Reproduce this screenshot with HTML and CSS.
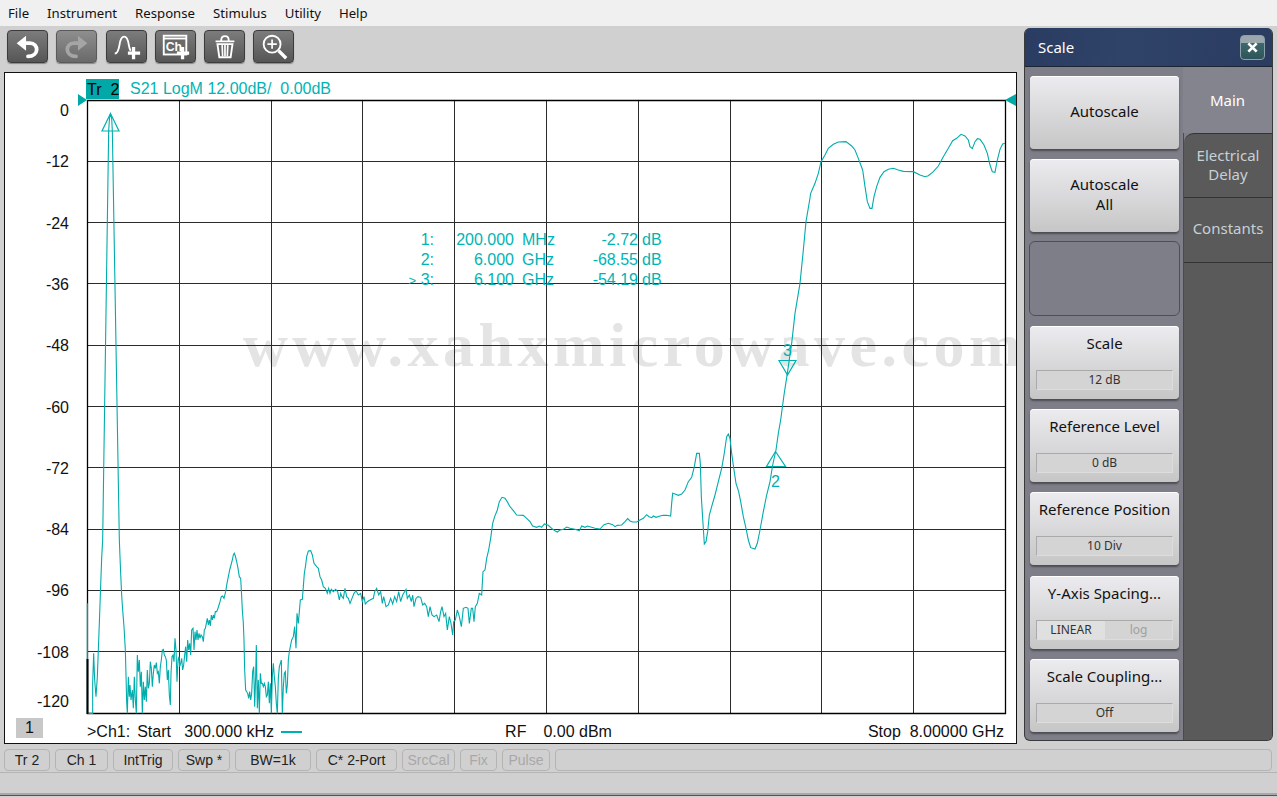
FILE: index.html
```html
<!DOCTYPE html>
<html lang="en">
<head>
<meta charset="utf-8">
<title>Scale</title>
<link rel="stylesheet" href="styles.css">
</head>
<body>
<nav class="menu">
  <span class="menu-item">File</span><span class="menu-item">Instrument</span><span class="menu-item">Response</span><span class="menu-item">Stimulus</span><span class="menu-item">Utility</span><span class="menu-item">Help</span>
</nav>
<div class="work">
  <div class="left">
    <div class="toolbar">
      <button class="tool"><svg viewBox="0 0 41 33" class="ico"><path d="M9 13 19 5V21Z" class="fill"/><path d="M18 13H23C33 13 33 27 21 27" class="line"/></svg></button>
      <button class="tool off"><svg viewBox="0 0 41 33" class="ico"><path d="M32 13 22 5V21Z" class="fill-off"/><path d="M23 13H18C8 13 8 27 20 27" class="line-off"/></svg></button>
      <button class="tool"><svg viewBox="0 0 41 33" class="ico"><path d="M8 24C11 24 12 21 13 15 14 8 16 6 18 6 20 6 22 8 23 15 23.500 18 24 20 25 21" class="thin"/><path d="M28 17V30M22 23.500H35" class="plus"/></svg></button>
      <button class="tool"><svg viewBox="0 0 41 33" class="ico"><rect x="8" y="5" width="24" height="20" class="box"/><path d="M8 8H32" class="thin"/><text x="10" y="21" class="ch">Ch</text><path d="M28 17V30M22 23.500H35" class="plus"/></svg></button>
      <button class="tool"><svg viewBox="0 0 41 33" class="ico"><path d="M11 11H31M17 10C17 4 25 4 25 10" class="thin"/><path d="M13 14H29L27 28H15Z" class="thin"/><path d="M18 15 18.500 27M21 15V27M24 15 23.500 27" class="stem"/></svg></button>
      <button class="tool"><svg viewBox="0 0 41 33" class="ico"><circle cx="19" cy="14" r="9" class="thin"/><path d="M19 9V19M14 14H24" class="stem"/><path d="M26 21 34 29" class="plus"/></svg></button>
    </div>
    <section class="chart">
      <header class="trace-head"><span class="trace-tag">Tr&nbsp;&nbsp;2</span><span class="trace-info">S21 LogM 12.00dB/&nbsp; 0.00dB</span></header>
      <svg class="plot" viewBox="5 99 1011 617" width="1011" height="617">
        <text class="mark-water" x="243" y="366">www.xahxmicrowave.com</text>
        <path class="grid" d="M179.500 100V714M271.500 100V714M362.500 100V714M454.500 100V714M546.500 100V714M638.500 100V714M730.500 100V714M821.500 100V714M913.500 100V714M88 161.500H1005M88 222.500H1005M88 283.500H1005M88 345.500H1005M88 406.500H1005M88 467.500H1005M88 529.500H1005M88 590.500H1005M88 651.500H1005"/>
        <path class="frame" d="M87.500 100.500H1005.500V713.500H87.500Z"/>
        <g class="axis">
          <text x="69" y="116">0</text><text x="69" y="167">-12</text><text x="69" y="229">-24</text><text x="69" y="290">-36</text><text x="69" y="351">-48</text><text x="69" y="413">-60</text><text x="69" y="474">-72</text><text x="69" y="535">-84</text><text x="69" y="596">-96</text><text x="69" y="658">-108</text><text x="69" y="707">-120</text>
        </g>
        <path class="ref" d="M78 94 87 100 78 106Z"/>
        <path class="ref" d="M1016 94 1005 100 1016 106Z"/>
        <g transform="translate(80 540) scale(.33333)">
          <polyline class="tr" points="22,190 22,520 38,520 38,430 41,340 44,420 48,470 52,410 55,330 58,250 61,165 65,55 68,0 86,-1227 88.500,-1266 91.500,-1278 95,-1266 97,-1227 118,0 122,100 125,165 128,210 132,260 136,330 138,405 140,485 142,520 145,410 148,470 150,435 153,480 157,450 160,505 163,410 166,480 169,520 172,345 175,395 178,360 181,440 184,395 187,520 190,425 193,480 196,440 199,485 202,390 205,445 208,430 211,365 214,385 217,440 220,400 223,375 226,385 229,368 232,400 235,395 238,430 241,380 244,360 247,330 250,328 253,345 256,350 259,360 262,420 265,390 268,465 271,495 273,400 276,350 279,345 282,365 285,295 288,330 291,425 294,360 297,350 299,380 302,370 305,355 308,390 311,375 314,345 317,320 320,365 323,300 326,330 329,310 332,345 335,270 339,265 342,330 345,275 348,300 351,270 354,300 357,280 360,295 363,285 367,290 370,305 373,270 376,265 379,250 382,235 385,255 388,240 391,258 394,225 397,240 400,225 403,235 406,215 410,215 413,208 417,195 420,185 424,170 428,168 432,175 437,155 441,130 445,110 449,90 453,75 457,60 460,45 463,40 466,48 470,65 474,85 478,110 482,115 484,150 487,210 490,250 492,300 494,390 497,450 500,455 503,460 506,475 509,455 512,480 515,460 518,395 521,380 524,500 527,410 529,315 532,505 535,420 538,520 541,400 544,430 547,430 550,440 553,430 556,440 559,470 562,465 565,425 568,490 571,430 574,520 577,410 580,370 583,410 586,440 589,490 592,520 595,415 598,380 601,370 604,360 607,520 610,440 613,400 616,395 619,460 622,435 625,360 628,335"/>
        </g>
        <g transform="translate(290 480) scale(.33333)">
          <polyline class="tr" points="-2,515 5,480 10,470 14,440 18,505 21,400 25,430 28,395 31,360 37,358 40,320 43,280 47,255 50,230 55,213 62,212 67,225 72,250 80,260 85,265 90,290 95,300 100,320 106,325 112,340 116,325 120,340 124,328 130,335 137,328 143,335 148,360 152,340 156,350 160,355 165,325 170,350 175,355 180,370 186,355 192,340 198,332 205,345 212,340 217,365 222,350 226,372 232,365 240,360 250,355 254,335 260,325 266,345 272,335 277,370 281,350 288,380 295,375 302,355 308,372 314,350 320,365 326,335 332,365 338,345 348,328 352,355 358,345 364,365 368,345 372,380 378,355 384,350 392,352 398,375 404,370 410,380 415,410 420,380 426,405 432,410 440,405 447,425 452,395 456,380 462,410 467,400 472,450 478,410 483,430 488,465 491,425 496,420 502,390 508,410 514,440 520,385 528,382 534,385 538,430 544,385 548,385 552,425 556,380 562,370 568,340 575,345 579,275 585,270 590,235 596,210 602,175 608,130 614,110 622,90 628,65 636,52 645,55 652,65 660,80"/>
        </g>
        <g transform="translate(500 420) scale(.33333)">
          <polyline class="tr" points="30,260 32,262 40,272 50,285 70,286 80,295 90,305 98,318 110,322 118,318 125,322 133,312 145,316 155,325 165,332 172,336 180,330 190,328 200,321 210,325 225,328 238,332 245,318 255,322 262,318 275,322 285,325 300,327 312,314 325,310 338,314 345,320 352,316 365,315 375,305 383,296 390,303 398,306 410,306 420,300 430,295 440,284 447,290 455,293 460,288 468,292 480,288 490,286 500,286 512,288 515,250 518,220 525,222 535,226 545,222 555,210 565,185 575,172 583,140 590,100 598,100 601,130 604,230 608,295 613,372 618,365 623,335 628,285 635,260 645,225 655,185 665,145 672,105 680,50 685,42 690,55 695,100 702,150 708,190 716,215 722,245 730,290 738,325 745,360 752,383 765,387 772,370 780,330 790,275 800,225 810,185 818,135 828,90 835,40 842,0"/>
        </g>
        <g transform="translate(760 200) scale(.33333)">
          <polyline class="tr" points="62,660 72,585 82,520 95,430 105,340 120,250 130,150 138,65 149,0"/>
        </g>
        <g transform="translate(760 90) scale(.33333)">
          <polyline class="tr" points="149,330 152,310 165,280 175,250 183,215 195,195 205,175 220,163 235,156 258,155 275,168 285,180 295,205 308,240 315,290 322,335 330,355 336,355 342,320 350,290 360,262 372,245 385,238 400,235 415,240 430,244 460,245 480,255 495,260 505,257 520,245 535,228 550,200 565,175 578,152 590,145 603,133 615,138 625,150 630,170 637,176 645,155 652,146 660,148 672,165 682,190 690,225 697,245 705,247 712,210 720,178 728,162 735,160"/>
        </g>
        <path class="left-edge" d="M87.500 659V714"/>
        <path class="mk" d="M110.500 113.500 102 131H119ZM775.500 451.500 766.500 466.500H785.500ZM779 360.500H796L787.500 375Z"/>
        <text class="mk-num" x="771" y="487">2</text>
        <text class="mk-num" x="783" y="356">3</text>
      </svg>
      <div class="readout">
        <span class="r-id">1:</span><span class="r-val">200.000</span><span class="r-unit">MHz</span><span class="r-val">-2.72</span><span class="r-unit">dB</span>
        <span class="r-id">2:</span><span class="r-val">6.000</span><span class="r-unit">GHz</span><span class="r-val">-68.55</span><span class="r-unit">dB</span>
        <span class="r-id"><small class="r-gt">&gt;</small> 3:</span><span class="r-val">6.100</span><span class="r-unit">GHz</span><span class="r-val">-54.19</span><span class="r-unit">dB</span>
      </div>
      <footer class="chart-foot">
        <span class="ch-num">1</span>
        <span class="start"><span class="ch-lab">&gt;Ch1:</span>Start&nbsp;&nbsp; 300.000 kHz</span>
        <span class="dash"></span>
        <span class="rf"><span class="rf-lab">RF</span>0.00 dBm</span>
        <span class="stop">Stop&nbsp; 8.00000 GHz</span>
      </footer>
    </section>
  </div>
  <aside class="panel">
    <div class="panel-head"><span>Scale</span><button class="close"><svg viewBox="0 0 25 25" class="close-ico"><path d="M8 8 17 17M17 8 8 17"/></svg></button></div>
    <div class="panel-body">
      <div class="keys">
        <button class="key plain">Autoscale</button>
        <button class="key plain">Autoscale<br>All</button>
        <div class="key-empty"></div>
        <button class="key val"><span>Scale</span><span class="field">12 dB</span></button>
        <button class="key val"><span>Reference Level</span><span class="field">0 dB</span></button>
        <button class="key val"><span>Reference Position</span><span class="field">10 Div</span></button>
        <button class="key val nudge"><span>Y-Axis Spacing...</span><span class="field split"><span class="on">LINEAR</span><span class="dim">log</span></span></button>
        <button class="key val"><span>Scale Coupling...</span><span class="field">Off</span></button>
      </div>
      <div class="tabs">
        <div class="tab active">Main</div>
        <div class="tab first">Electrical<br>Delay</div>
        <div class="tab">Constants</div>
        <div class="tab-rest"></div>
      </div>
    </div>
  </aside>
</div>
<div class="status">
  <span class="st w46">Tr 2</span><span class="st w53">Ch 1</span><span class="st w60">IntTrig</span><span class="st w52">Swp *</span><span class="st w76">BW=1k</span><span class="st w81">C* 2-Port</span><span class="st w53 dis">SrcCal</span><span class="st w37 dis">Fix</span><span class="st w48 dis">Pulse</span><span class="st grow"></span>
</div>
<div class="bottom"></div>
</body>
</html>
```
FILE: styles.css
```css
* { box-sizing: border-box; }
html, body { margin: 0; height: 100%; }
body {
  width: 1277px; height: 797px; overflow: hidden;
  display: flex; flex-direction: column;
  background: #d0d0d0;
  font-family: "Liberation Sans", Arial, sans-serif;
}
button { font: inherit; padding: 0; cursor: default; }

.menu { height: 26px; flex: none; background: #f0f0f0; display: flex; align-items: center; padding-left: 8px; font: 13.200px "Noto Sans", sans-serif; color: #111; }
.menu-item { margin-right: 18px; }

.work { flex: none; height: 720px; display: flex; padding: 2px 4px 0; }
.left { width: 1013px; display: flex; flex-direction: column; }
.toolbar { height: 44px; flex: none; display: flex; gap: 8px; padding: 2px 0 0 3px; }
.tool { width: 41px; height: 33px; border: 1px solid #3c3c3c; border-radius: 4px; background: linear-gradient(#7c7c7c, #565656); box-shadow: 0 1px 1px #888; display: block; }
.tool:nth-child(3) { margin-left: 1px; }
.tool.off { background: linear-gradient(#8e8e8e, #6a6a6a); border-color: #5a5a5a; }
.ico { display: block; width: 39px; height: 31px; fill: none; }
.fill { fill: #fff; }
.fill-off { fill: #a5a5a5; }
.line { stroke: #fff; stroke-width: 4; fill: none; stroke-linecap: round; }
.line-off { stroke: #a5a5a5; stroke-width: 4; fill: none; stroke-linecap: round; }
.thin { stroke: #fff; stroke-width: 2; fill: none; }
.stem { stroke: #fff; stroke-width: 1.800; fill: none; }
.plus { stroke: #fff; stroke-width: 3.500; fill: none; }
.box { stroke: #fff; stroke-width: 2; fill: #6a6a6a; }
.ch { fill: #fff; font: bold 13px "Liberation Sans", sans-serif; }

.chart { position: relative; width: 1013px; height: 672px; background: #fff; border: 1px solid #111; display: flex; flex-direction: column; overflow: hidden; }
.trace-head { height: 26px; flex: none; display: flex; align-items: flex-end; padding-left: 81px; font-size: 16px; }
.trace-tag { width: 33px; height: 20px; background: #00a8a8; color: #000; line-height: 21px; padding-left: 1px; white-space: nowrap; }
.trace-info { margin-left: 11px; color: #00b4b4; line-height: 21px; white-space: nowrap; }
.plot { display: block; flex: none; overflow: visible; }
.mark-water { font: bold 62px "Liberation Serif", serif; letter-spacing: 4.500px; fill: #e4e4e4; }
.grid { stroke: #2b2b2b; stroke-width: 1; fill: none; }
.frame { stroke: #000; stroke-width: 1.300; fill: none; }
.left-edge { stroke: #000; stroke-width: 2; fill: none; }
.axis text { font: 16px "Liberation Sans", sans-serif; text-anchor: end; fill: #111; }
.ref { fill: #00a8a8; }
.tr { fill: none; stroke: #00acac; stroke-width: 1.100; vector-effect: non-scaling-stroke; }
.mk { fill: none; stroke: #00b0b0; stroke-width: 1.200; }
.mk-num { font: 16px "Liberation Sans", sans-serif; fill: #00b0b0; }

.readout { position: absolute; left: 400px; top: 157px; display: grid; grid-template-columns: 29px 80px 41px 83px auto; grid-auto-rows: 20px; font-size: 16px; line-height: 20px; color: #00b4b4; white-space: pre; }
.r-id, .r-val { text-align: right; }
.r-unit { padding-left: 8px; }
.r-unit:nth-child(5n) { padding-left: 4px; }
.r-gt { font-size: 13px; }

.chart-foot { position: relative; flex: 1; display: flex; align-items: center; font-size: 16px; color: #111; white-space: nowrap; padding: 4px 0 0 11px; }
.ch-num { width: 27px; height: 20px; background: #c8c8c8; text-align: center; line-height: 20px; margin-top: -8px; }
.start { margin-left: 44px; }
.ch-lab { margin-right: 7px; }
.dash { width: 21px; height: 2px; background: #00b0b0; margin-left: 7px; }
.rf { margin-left: 203px; }
.rf-lab { margin-right: 17px; }
.stop { margin-left: auto; margin-right: 12px; }

.panel { width: 249px; height: 713px; margin-left: 7px; background: #7e7e88; border: 1px solid #3a3a3a; border-top: 0; border-radius: 6px; overflow: hidden; display: flex; flex-direction: column; font-family: "Noto Sans", sans-serif; }
.panel-head { height: 39px; flex: none; background: linear-gradient(100deg, #2a3c62, #2f4268 40%, #2a3c60); display: flex; align-items: center; justify-content: space-between; padding: 0 7px 0 13px; color: #fff; font-size: 15px; border-bottom: 1px solid #1d2433; }
.close { width: 25px; height: 25px; border: 1px solid #8ea0a8; border-radius: 4px; background: linear-gradient(#9aa7ad 0 30%, #3c6a6e 30%, #2e5559); }
.close-ico { display: block; width: 23px; height: 23px; }
.close-ico path { stroke: #fff; stroke-width: 3; }
.panel-body { flex: 1; display: flex; min-height: 0; }
.keys { width: 158px; flex: none; padding: 9px 0 0 5px; display: flex; flex-direction: column; gap: 10px; }
.key { width: 149px; height: 73px; flex: none; border: 0; border-radius: 4px; background: linear-gradient(#ececf0, #c6c6c6); color: #111; font-size: 15px; line-height: 20px; box-shadow: 0 1px 0 #fff inset, 0 2px 2px #4c4c54; display: block; }
.key.plain { padding-bottom: 4px; }
.key-empty { width: 151px; height: 75px; flex: none; margin: -1px -1px 0; border: 1px solid #4e4e58; border-radius: 6px; background: #7e7e88; }
.key.val { display: flex; flex-direction: column; align-items: center; padding-top: 7px; }
.key.nudge { margin-top: 1px; }
.field { margin-top: 17px; width: 137px; height: 20px; border: 1px solid #aaa; border-right-color: #ddd; border-bottom-color: #ddd; background: #d4d4d4; font-size: 12px; line-height: 18px; color: #333; text-align: center; }
.split { display: flex; }
.on { width: 68px; background: #e0e0e0; }
.dim { flex: 1; color: #a0a0a0; }

.tabs { flex: 1; display: flex; flex-direction: column; border-left: 1px solid #4a4a4a; color: #d8d8d8; font-size: 15px; line-height: 19px; }
.tab { height: 65px; flex: none; background: #5a5a5a; border-bottom: 1px solid #333; display: flex; align-items: center; justify-content: center; text-align: center; color: #c8d0d4; padding-bottom: 3px; }
.tab.active { height: 66px; background: #84848e; border: 0; color: #fff; padding: 1px 0 0; margin-left: -1px; }
.tab.first { border-top: 1px solid #333; border-top-left-radius: 10px; padding-bottom: 1px; }
.tab-rest { flex: 1; background: #5a5a5a; }

.status { height: 26px; flex: none; display: flex; gap: 5px; padding: 3px 0 1px 4px; }
.st { flex: none; border: 1px solid #b4b4b4; border-radius: 4px; display: flex; align-items: center; justify-content: center; font-size: 14px; color: #222; background: #d0d0d0; }
.dis { color: #a8a8a8; }
.w37 { width: 37px; } .w46 { width: 46px; } .w48 { width: 48px; } .w52 { width: 52px; } .w53 { width: 53px; } .w60 { width: 60px; } .w76 { width: 76px; } .w81 { width: 81px; }
.grow { flex: 1; margin-right: 5px; }
.bottom { height: 23px; flex: none; border-top: 1px solid #b4b4b4; border-bottom: 2px solid #a8a8a8; box-shadow: 0 1px 0 #555; }
```
